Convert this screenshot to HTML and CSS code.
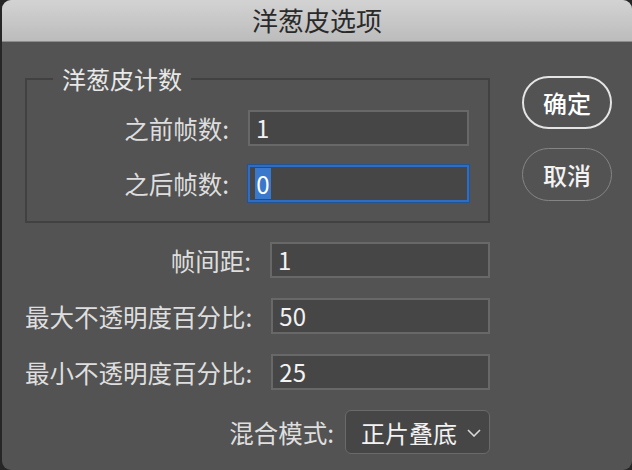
FILE: index.html
```html
<!DOCTYPE html>
<html lang="zh-CN">
<head>
    <meta charset="UTF-8">
    <meta name="viewport" content="width=device-width, initial-scale=1.0">
    <title>洋葱皮选项</title>
    <link rel="stylesheet" href="styles.css">
</head>
<body>
    <div class="window">
        <div class="titlebar">洋葱皮选项</div>
        <div class="content">
            <div class="form">
                <fieldset class="group">
                    <legend>洋葱皮计数</legend>
                    <div class="row">
                        <span class="label">之前帧数:</span>
                        <div class="field">1</div>
                    </div>
                    <div class="row">
                        <span class="label">之后帧数:</span>
                        <div class="field focused"><span class="selected">0</span></div>
                    </div>
                </fieldset>

                <div class="rows">
                    <div class="row">
                        <span class="label">帧间距:</span>
                        <div class="field">1</div>
                    </div>
                    <div class="row">
                        <span class="label">最大不透明度百分比:</span>
                        <div class="field">50</div>
                    </div>
                    <div class="row">
                        <span class="label">最小不透明度百分比:</span>
                        <div class="field">25</div>
                    </div>
                    <div class="row select-row">
                        <span class="label">混合模式:</span>
                        <div class="select">
                            <span>正片叠底</span>
                            <svg class="chevron" width="14" height="8" viewBox="0 0 14 8">
                                <path d="M1 1 L7 7 L13 1" fill="none" stroke="#d8d8d8" stroke-width="1.6"/>
                            </svg>
                        </div>
                    </div>
                </div>
            </div>

            <div class="buttons">
                <button class="btn primary">确定</button>
                <button class="btn">取消</button>
            </div>
        </div>
    </div>
</body>
</html>
```

FILE: styles.css
```css
* {
    box-sizing: border-box;
}
body {
    margin: 0;
    background-color: #262626;
    font-family: "Noto Sans CJK SC", "Noto Sans", sans-serif;
}
.window {
    margin-left: 2px;
    width: 630px;
    height: 470px;
    border-radius: 9px;
    overflow: hidden;
    background-color: #535353;
}
.titlebar {
    height: 42px;
    line-height: 40px;
    text-align: center;
    font-size: 26px;
    color: #2a2a2a;
    background: linear-gradient(#d3d3d3, #bcbcbc);
    border-bottom: 1px solid #8c8c8c;
}
.content {
    display: flex;
    gap: 32px;
    padding: 23px 0 0 23px;
}
.form {
    width: 465px;
}
.group {
    margin: 0;
    padding: 17px 19px 20px 26px;
    border: 2px solid #414141;
}
.group legend {
    padding: 0 9px;
    font-size: 24px;
    line-height: 28px;
    color: #e8e8e8;
}
.group .row + .row {
    margin-top: 19px;
}
.group .field {
    width: 221px;
}
.row {
    display: flex;
    justify-content: flex-end;
    align-items: center;
    gap: 19px;
    height: 36px;
}
.label {
    font-size: 24.5px;
    color: #dedede;
    white-space: nowrap;
}
.field {
    width: 220px;
    height: 36px;
    padding-left: 6px;
    font-size: 24px;
    line-height: 32px;
    color: #f2f2f2;
    background-color: #464646;
    border: 2px solid #686868;
}
.field.focused {
    height: 37px;
    padding-left: 5px;
    border: 2px solid #2f6cc4;
    box-shadow: 0 0 0 1px #24548f;
}
.selected {
    display: inline-block;
    width: 16px;
    height: 31px;
    line-height: 31px;
    text-align: center;
    margin-top: 1px;
    vertical-align: top;
    background-color: #3a78cc;
    color: #ffffff;
}
.rows {
    margin-top: 19px;
}
.rows .row + .row {
    margin-top: 20px;
}
.rows .select-row {
    height: 44px;
    margin-top: 17px;
    gap: 11px;
}
.select {
    display: flex;
    align-items: center;
    justify-content: space-between;
    width: 145px;
    height: 44px;
    padding: 0 8px 0 15px;
    font-size: 24px;
    color: #f2f2f2;
    background-color: #464646;
    border: 1px solid #6a6a6a;
    border-radius: 6px;
}
.chevron {
    margin-top: 2px;
}
.buttons {
    display: flex;
    flex-direction: column;
    gap: 19px;
    margin-top: 11px;
}
.btn {
    width: 90px;
    height: 53px;
    border-radius: 27px;
    font-family: inherit;
    font-size: 24px;
    font-weight: 500;
    color: #f2f2f2;
    background-color: transparent;
    border: 1.5px solid #858585;
}
.btn.primary {
    border: 2px solid #e4e4e4;
    color: #ffffff;
}
```
